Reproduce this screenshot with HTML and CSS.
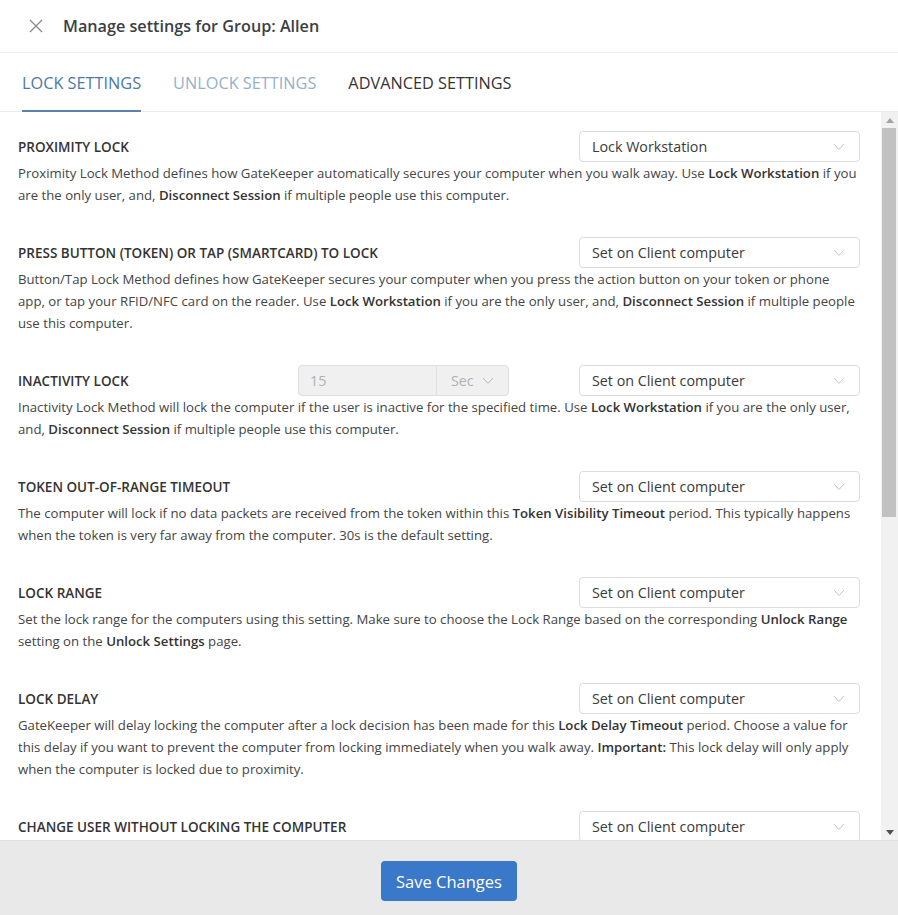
FILE: index.html
```html
<!DOCTYPE html>
<html lang="en">
<head>
<meta charset="utf-8">
<title>Manage settings for Group: Allen</title>
<link rel="stylesheet" href="styles.css">
</head>
<body>
<div class="dialog">
  <header class="dialog-header">
    <button class="close-btn" aria-label="Close">
      <svg width="14" height="14" viewBox="0 0 14 14"><path d="M1 1 L13 13 M13 1 L1 13" stroke="#8a8a8a" stroke-width="1.4" fill="none"/></svg>
    </button>
    <h1 class="dialog-title">Manage settings for Group: Allen</h1>
  </header>
  <nav class="tabs">
    <a class="tab tab-active">LOCK SETTINGS</a>
    <a class="tab tab-muted">UNLOCK SETTINGS</a>
    <a class="tab">ADVANCED SETTINGS</a>
  </nav>
  <div class="body-row">
    <main class="content">
      <section class="setting">
        <div class="setting-head">
          <h2 class="setting-label">PROXIMITY LOCK</h2>
          <div class="select"><span>Lock Workstation</span><svg class="chev" width="12" height="8" viewBox="0 0 12 8"><path d="M1 1 L6 6.5 L11 1" stroke="#c4c4c4" stroke-width="1" fill="none"/></svg></div>
        </div>
        <p class="setting-desc">Proximity Lock Method defines how GateKeeper automatically secures your computer when you walk away. Use <b>Lock Workstation</b> if you<br>are the only user, and, <b>Disconnect Session</b> if multiple people use this computer.</p>
      </section>
      <section class="setting">
        <div class="setting-head">
          <h2 class="setting-label">PRESS BUTTON (TOKEN) OR TAP (SMARTCARD) TO LOCK</h2>
          <div class="select"><span>Set on Client computer</span><svg class="chev" width="12" height="8" viewBox="0 0 12 8"><path d="M1 1 L6 6.5 L11 1" stroke="#c4c4c4" stroke-width="1" fill="none"/></svg></div>
        </div>
        <p class="setting-desc">Button/Tap Lock Method defines how GateKeeper secures your computer when you press the action button on your token or phone<br>app, or tap your RFID/NFC card on the reader. Use <b>Lock Workstation</b> if you are the only user, and, <b>Disconnect Session</b> if multiple people<br>use this computer.</p>
      </section>
      <section class="setting">
        <div class="setting-head">
          <h2 class="setting-label">INACTIVITY LOCK</h2>
          <div class="input-group">
            <span class="ig-value">15</span>
            <span class="ig-unit">Sec<svg class="chev-sm" width="12" height="8" viewBox="0 0 12 8"><path d="M1 1 L6 6.5 L11 1" stroke="#b8b8b8" stroke-width="1" fill="none"/></svg></span>
          </div>
          <div class="select"><span>Set on Client computer</span><svg class="chev" width="12" height="8" viewBox="0 0 12 8"><path d="M1 1 L6 6.5 L11 1" stroke="#c4c4c4" stroke-width="1" fill="none"/></svg></div>
        </div>
        <p class="setting-desc">Inactivity Lock Method will lock the computer if the user is inactive for the specified time. Use <b>Lock Workstation</b> if you are the only user,<br>and, <b>Disconnect Session</b> if multiple people use this computer.</p>
      </section>
      <section class="setting">
        <div class="setting-head">
          <h2 class="setting-label">TOKEN OUT-OF-RANGE TIMEOUT</h2>
          <div class="select"><span>Set on Client computer</span><svg class="chev" width="12" height="8" viewBox="0 0 12 8"><path d="M1 1 L6 6.5 L11 1" stroke="#c4c4c4" stroke-width="1" fill="none"/></svg></div>
        </div>
        <p class="setting-desc">The computer will lock if no data packets are received from the token within this <b>Token Visibility Timeout</b> period. This typically happens<br>when the token is very far away from the computer. 30s is the default setting.</p>
      </section>
      <section class="setting">
        <div class="setting-head">
          <h2 class="setting-label">LOCK RANGE</h2>
          <div class="select"><span>Set on Client computer</span><svg class="chev" width="12" height="8" viewBox="0 0 12 8"><path d="M1 1 L6 6.5 L11 1" stroke="#c4c4c4" stroke-width="1" fill="none"/></svg></div>
        </div>
        <p class="setting-desc">Set the lock range for the computers using this setting. Make sure to choose the Lock Range based on the corresponding <b>Unlock Range</b><br>setting on the <b>Unlock Settings</b> page.</p>
      </section>
      <section class="setting">
        <div class="setting-head">
          <h2 class="setting-label">LOCK DELAY</h2>
          <div class="select"><span>Set on Client computer</span><svg class="chev" width="12" height="8" viewBox="0 0 12 8"><path d="M1 1 L6 6.5 L11 1" stroke="#c4c4c4" stroke-width="1" fill="none"/></svg></div>
        </div>
        <p class="setting-desc">GateKeeper will delay locking the computer after a lock decision has been made for this <b>Lock Delay Timeout</b> period. Choose a value for<br>this delay if you want to prevent the computer from locking immediately when you walk away. <b>Important:</b> This lock delay will only apply<br>when the computer is locked due to proximity.</p>
      </section>
      <section class="setting">
        <div class="setting-head">
          <h2 class="setting-label">CHANGE USER WITHOUT LOCKING THE COMPUTER</h2>
          <div class="select"><span>Set on Client computer</span><svg class="chev" width="12" height="8" viewBox="0 0 12 8"><path d="M1 1 L6 6.5 L11 1" stroke="#c4c4c4" stroke-width="1" fill="none"/></svg></div>
        </div>
      </section>
    </main>
    <div class="scrollbar" aria-hidden="true">
      <div class="sb-btn"><svg width="8" height="5" viewBox="0 0 8 5"><path d="M0 5 L4 0 L8 5 Z" fill="#a3a3a3"/></svg></div>
      <div class="sb-track"><div class="sb-thumb"></div></div>
      <div class="sb-btn"><svg width="8" height="5" viewBox="0 0 8 5"><path d="M0 0 L8 0 L4 5 Z" fill="#505050"/></svg></div>
    </div>
  </div>
  <footer class="dialog-footer">
    <button class="btn-primary">Save Changes</button>
  </footer>
</div>
</body>
</html>
```
FILE: styles.css
```css
html, body {
  margin: 0;
  padding: 0;
  height: 100%;
}
body {
  font-family: "Open Sans", "Noto Sans", "Liberation Sans", sans-serif;
  color: #3b3f44;
  background: #fff;
}
.dialog {
  display: flex;
  flex-direction: column;
  height: 915px;
}
.dialog-header {
  display: flex;
  align-items: center;
  height: 52px;
  padding-left: 29px;
  border-bottom: 1px solid #f0f0f0;
  flex: none;
}
.close-btn {
  border: 0;
  background: none;
  padding: 0;
  width: 14px;
  height: 14px;
  display: flex;
  margin-right: 20px;
  margin-bottom: 1px;
}
.dialog-title {
  margin: 0 0 1px;
  font-size: 16.2px;
  font-weight: 600;
  color: #3a3f45;
}
.tabs {
  display: flex;
  gap: 32px;
  padding-left: 22px;
  height: 58px;
  border-bottom: 1px solid #ececec;
  flex: none;
}
.tab {
  display: flex;
  align-items: center;
  font-size: 16.3px;
  color: #333;
  border-bottom: 2px solid transparent;
  margin-bottom: -1px;
  padding-top: 2px;
}
.tab-active {
  color: #4b79aa;
  border-bottom-color: #5b82ad;
}
.tab-muted {
  color: #98afc9;
}
.body-row {
  flex: 1;
  display: flex;
  min-height: 0;
}
.content {
  flex: 1;
  min-width: 0;
  overflow: hidden;
  padding: 19px 21px 0 18px;
}
.scrollbar {
  width: 17px;
  flex: none;
  background: #f1f1f1;
  display: flex;
  flex-direction: column;
}
.sb-btn {
  height: 16px;
  display: flex;
  align-items: center;
  justify-content: center;
  flex: none;
}
.sb-track {
  flex: 1;
  padding: 0 2px 0 1px;
}
.sb-thumb {
  height: 389px;
  background: #c1c1c1;
}
.setting {
  margin-bottom: 31px;
}
.setting-head {
  display: flex;
  align-items: center;
  height: 31px;
}
.setting-label {
  margin: 0;
  font-size: 13.5px;
  font-weight: 600;
  color: #333;
  flex: 1;
}
.select {
  display: flex;
  align-items: center;
  justify-content: space-between;
  padding: 0 14px 0 12px;
  box-sizing: border-box;
  width: 281px;
  height: 31px;
  border: 1px solid #dcdcdc;
  border-radius: 4px;
  font-size: 14.3px;
  color: #3a3a3a;
  flex: none;
}
.chev {
  flex: none;
}
.input-group {
  display: flex;
  width: 211px;
  height: 31px;
  box-sizing: border-box;
  border: 1px solid #dedede;
  border-radius: 4px;
  background: #f0f0f0;
  margin-right: 70px;
  flex: none;
  font-size: 14.3px;
  color: #b0b0b0;
}
.ig-value {
  flex: 1;
  display: flex;
  align-items: center;
  padding-left: 11px;
  border-right: 1px solid #e2e2e2;
}
.ig-unit {
  width: 71px;
  display: flex;
  align-items: center;
  padding-left: 14px;
  gap: 8px;
  box-sizing: border-box;
}
.setting-desc {
  margin: 0;
  font-size: 13.2px;
  line-height: 22px;
  color: #444;
}
.setting-desc b {
  font-weight: 600;
  color: #333;
}
.dialog-footer {
  flex: none;
  height: 75px;
  background: #e9e9e9;
  border-top: 1px solid #e2e2e2;
  box-sizing: border-box;
  display: flex;
  justify-content: center;
  padding-top: 20px;
}
.btn-primary {
  width: 136px;
  height: 40px;
  background: #3a78c9;
  color: #fff;
  border: 0;
  border-radius: 4px;
  font-family: inherit;
  font-size: 16.5px;
}
```
